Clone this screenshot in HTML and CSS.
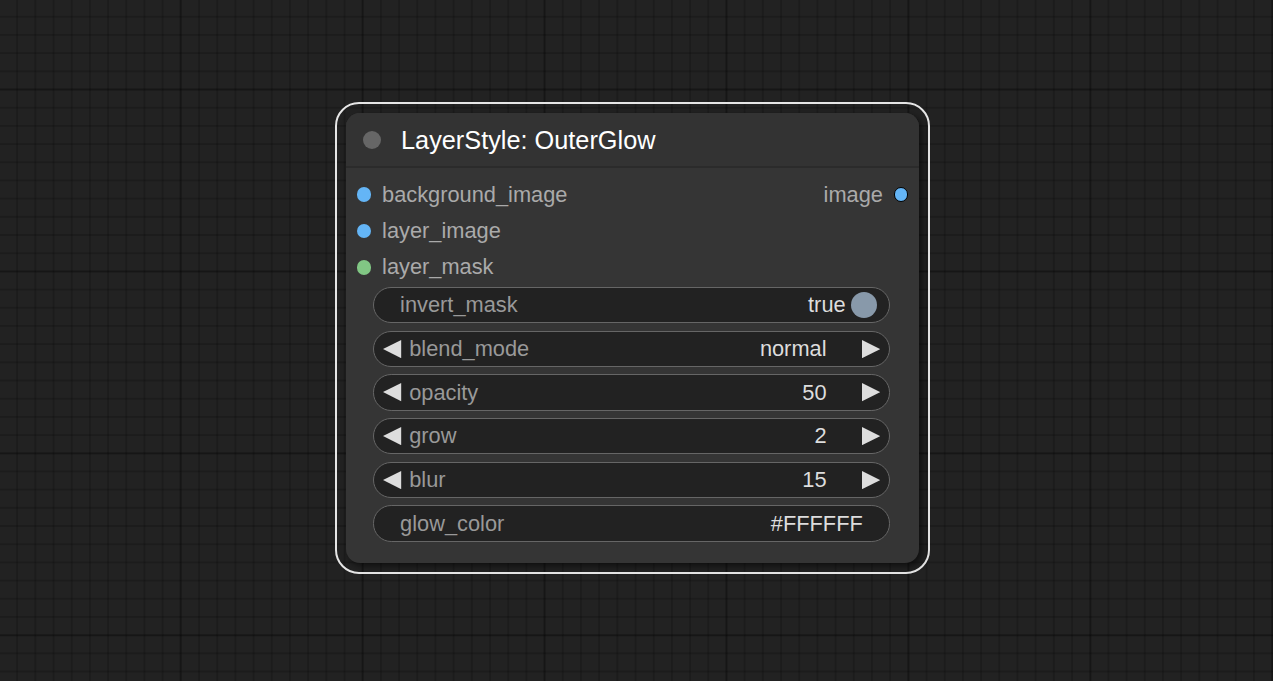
FILE: index.html
```html
<!DOCTYPE html>
<html>
<head>
<meta charset="utf-8">
<title>LayerStyle: OuterGlow</title>
<link rel="stylesheet" href="styles.css">
</head>
<body>
<div class="canvas">
  <div class="selection">
    <div class="node">
      <div class="title">
        <span class="title-dot"></span>
        <span class="title-text">LayerStyle: OuterGlow</span>
      </div>
      <div class="slots">
        <div class="slot-row">
          <div class="slot in"><span class="dot image"></span><span class="slot-label">background_image</span></div>
          <div class="slot out"><span class="slot-label">image</span><span class="dot image outlined"></span></div>
        </div>
        <div class="slot-row">
          <div class="slot in"><span class="dot image"></span><span class="slot-label">layer_image</span></div>
        </div>
        <div class="slot-row">
          <div class="slot in"><span class="dot mask"></span><span class="slot-label">layer_mask</span></div>
        </div>
      </div>
      <div class="widgets">
        <div class="widget toggle">
          <span class="w-label">invert_mask</span>
          <span class="w-value">true</span>
          <span class="knob"></span>
        </div>
        <div class="widget combo">
          <svg class="arrow" viewBox="0 0 18 18"><polygon points="0,9 18,0 18,18"/></svg>
          <span class="w-label">blend_mode</span>
          <span class="w-value">normal</span>
          <svg class="arrow right" viewBox="0 0 18 18"><polygon points="18,9 0,0 0,18"/></svg>
        </div>
        <div class="widget combo">
          <svg class="arrow" viewBox="0 0 18 18"><polygon points="0,9 18,0 18,18"/></svg>
          <span class="w-label">opacity</span>
          <span class="w-value">50</span>
          <svg class="arrow right" viewBox="0 0 18 18"><polygon points="18,9 0,0 0,18"/></svg>
        </div>
        <div class="widget combo">
          <svg class="arrow" viewBox="0 0 18 18"><polygon points="0,9 18,0 18,18"/></svg>
          <span class="w-label">grow</span>
          <span class="w-value">2</span>
          <svg class="arrow right" viewBox="0 0 18 18"><polygon points="18,9 0,0 0,18"/></svg>
        </div>
        <div class="widget combo">
          <svg class="arrow" viewBox="0 0 18 18"><polygon points="0,9 18,0 18,18"/></svg>
          <span class="w-label">blur</span>
          <span class="w-value">15</span>
          <svg class="arrow right" viewBox="0 0 18 18"><polygon points="18,9 0,0 0,18"/></svg>
        </div>
        <div class="widget text">
          <span class="w-label">glow_color</span>
          <span class="w-value">#FFFFFF</span>
        </div>
      </div>
    </div>
  </div>
</div>
</body>
</html>
```

FILE: styles.css
```css
html, body {
  margin: 0;
  height: 100%;
}

body {
  font-family: "Liberation Sans", Arial, sans-serif;
  background-color: #222222;
  background-image:
    linear-gradient(90deg, rgba(0, 0, 0, 0.2) 2.5px, transparent 2.5px),
    linear-gradient(rgba(0, 0, 0, 0.2) 2.5px, transparent 2.5px),
    linear-gradient(90deg, rgba(0, 0, 0, 0.17) 1.5px, transparent 1.5px),
    linear-gradient(rgba(0, 0, 0, 0.17) 1.5px, transparent 1.5px);
  background-size: 182px 182px, 182px 182px, 18.2px 18.2px, 18.2px 18.2px;
  background-position: 179.5px 0, 0 88.5px, 16.2px 0, 0 15.8px;
  overflow: hidden;
}

.canvas {
  padding: 102px 0 0 335px;
}

.selection {
  width: fit-content;
  border: 2px solid #e6e6e6;
  border-radius: 24px;
  padding: 9px;
}

.node {
  width: 573px;
  background: #353535;
  border-radius: 14px;
  box-shadow: 3px 3px 7px rgba(0, 0, 0, 0.55);
  padding-bottom: 21.1px;
  overflow: hidden;
}

.title {
  height: 51px;
  padding-top: 2px;
  background: #333333;
  border-bottom: 2px solid #2b2b2b;
  display: flex;
  align-items: center;
  padding-left: 17px;
}

.title-dot {
  width: 18px;
  height: 18px;
  border-radius: 50%;
  background: #666666;
  flex: none;
  position: relative;
  top: -1px;
}

.title-text {
  margin-left: 20px;
  color: #ffffff;
  font-size: 25.3px;
  white-space: nowrap;
}

.slots {
  padding-top: 8.5px;
}

.slot-row {
  height: 36.4px;
  display: flex;
  align-items: center;
  justify-content: space-between;
  padding: 0 10.9px;
}

.slot {
  display: flex;
  align-items: center;
  gap: 10.6px;
}

.slot-label {
  color: #aaaaaa;
  font-size: 21.8px;
  white-space: nowrap;
}

.dot {
  width: 14.6px;
  height: 14.6px;
  border-radius: 50%;
  box-sizing: border-box;
  flex: none;
}

.dot.image { background: #64b5f6; }
.dot.mask { background: #81c784; }
.dot.outlined { border: 1.8px solid #000000; }

.widgets {
  margin-top: 1.3px;
  display: flex;
  flex-direction: column;
  gap: 7.3px;
}

.widget {
  margin-left: 27.3px;
  width: 517px;
  height: 36.4px;
  box-sizing: border-box;
  border: 1.5px solid #666666;
  border-radius: 18.2px;
  background: #222222;
  display: flex;
  align-items: center;
  font-size: 21.8px;
  white-space: nowrap;
}

.w-label {
  color: #999999;
}

.w-value {
  color: #dddddd;
  margin-left: auto;
}

.arrow {
  width: 18.2px;
  height: 18.2px;
  fill: #dddddd;
  flex: none;
}

.combo {
  padding: 0 9.1px 0 9.2px;
}

.combo .w-label {
  margin-left: 7.5px;
}

.combo .arrow.right {
  margin-left: 35.5px;
}

.toggle {
  padding: 0 12.4px 0 25.8px;
}

.knob {
  width: 26.2px;
  height: 26.2px;
  border-radius: 50%;
  background: #8899aa;
  margin-left: 5.1px;
  flex: none;
}

.text {
  padding: 0 26.5px 0 25.8px;
}
```
